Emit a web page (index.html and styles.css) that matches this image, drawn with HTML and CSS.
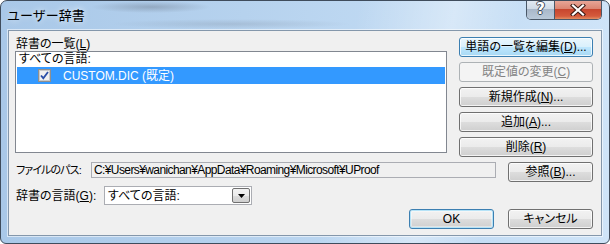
FILE: index.html
```html
<!DOCTYPE html>
<html lang="ja">
<head>
<meta charset="utf-8">
<title>ユーザー辞書</title>
<link rel="stylesheet" href="styles.css">
</head>
<body>
<div class="window">
  <div class="titlebar">
    <div class="title">ユーザー辞書</div>
    <div class="controls">
      <div class="ctl help"><span class="q">?</span></div>
      <div class="ctl close">
        <svg width="16" height="12" viewBox="0 0 16 12"><path d="M3 1.5 L13 10.5 M13 1.5 L3 10.5" stroke="#3b1a14" stroke-width="4.2" stroke-linecap="square"/><path d="M3 1.5 L13 10.5 M13 1.5 L3 10.5" stroke="#ffffff" stroke-width="2.2" stroke-linecap="square"/></svg>
      </div>
    </div>
  </div>
  <div class="client">
    <div class="top-row">
      <div class="list-col">
        <div class="label">辞書の一覧(<u>L</u>)</div>
        <div class="listbox">
          <div class="row-all">すべての言語:</div>
          <div class="row-sel">
            <span class="check"><svg width="13" height="13" viewBox="0 0 13 13"><rect x="0.5" y="0.5" width="12" height="12" fill="#dcdcdc" stroke="#8f8f8f"/><rect x="1.5" y="1.5" width="10" height="10" fill="#f0f0f0" stroke="#c9c9c9"/><path d="M3 6.5 L5.3 9.2 L10 3" fill="none" stroke="#2a4fa8" stroke-width="1.8"/></svg></span>
            <span class="sel-text">CUSTOM.DIC (既定)</span>
          </div>
        </div>
      </div>
      <div class="btn-col">
        <div class="btn hot">単語の一覧を編集(<u>D</u>)...</div>
        <div class="btn disabled">既定値の変更(<u>C</u>)</div>
        <div class="btn">新規作成(<u>N</u>)...</div>
        <div class="btn">追加(<u>A</u>)...</div>
        <div class="btn">削除(<u>R</u>)</div>
      </div>
    </div>
    <div class="path-row">
      <div class="path-label">ファイルのパス:</div>
      <div class="path-field">C:¥Users¥wanichan¥AppData¥Roaming¥Microsoft¥UProof</div>
      <div class="btn small">参照(<u>B</u>)...</div>
    </div>
    <div class="lang-row">
      <div class="lang-label">辞書の言語(<u>G</u>):</div>
      <div class="combo">
        <span class="combo-text">すべての言語:</span>
        <span class="combo-btn"><svg width="7" height="4" viewBox="0 0 7 4"><path d="M0 0 H7 L3.5 4 Z" fill="#000"/></svg></span>
      </div>
    </div>
    <div class="ok-row">
      <div class="btn small default">OK</div>
      <div class="btn small">キャンセル</div>
    </div>
  </div>
</div>
</body>
</html>
```
FILE: styles.css
```css
* { box-sizing: border-box; }
html, body { margin: 0; padding: 0; }
body {
  width: 610px;
  height: 244px;
  overflow: hidden;
  font-family: "Liberation Sans", "Noto Sans CJK JP", sans-serif;
  font-feature-settings: "palt";
  font-size: 12px;
  color: #000;
  background: #ffffff;
  white-space: nowrap;
}
u { text-decoration: underline; text-underline-offset: 1px; }

.window {
  width: 610px;
  height: 244px;
  border: 1px solid #3f4c5c;
  border-radius: 7px 7px 6px 6px;
  display: flex;
  flex-direction: column;
  overflow: hidden;
  background:
    radial-gradient(ellipse 60px 6px at 150px 6px, rgba(90,100,115,0.35), rgba(90,100,115,0) 100%),
    radial-gradient(ellipse 120px 5px at 230px 23px, rgba(110,120,135,0.22), rgba(110,120,135,0) 100%),
    linear-gradient(100deg, rgba(255,255,255,0) 55%, rgba(255,255,255,0.35) 70%, rgba(255,255,255,0) 80%),
    linear-gradient(90deg, #a9c8e8 0%, #b6d2ee 40%, #c3dcf4 75%, #cfe4f8 100%);
}

.titlebar {
  height: 29px;
  display: flex;
  align-items: flex-start;
  padding-left: 6px;
  padding-right: 7px;
  flex-shrink: 0;
}
.title {
  font-family: "Noto Sans CJK JP", sans-serif;
  font-feature-settings: normal;
  font-size: 13px;
  line-height: 15px;
  margin-top: 6px;
  color: #000;
  text-shadow: 0 0 6px rgba(255,255,255,0.9);
}
.controls {
  margin-left: auto;
  margin-top: -1px;
  display: flex;
  height: 20px;
  border: 1px solid #4a5868;
  border-top: none;
  border-radius: 0 0 5px 5px;
  overflow: hidden;
}
.ctl {
  height: 19px;
  display: flex;
  align-items: center;
  justify-content: center;
}
.help {
  width: 28px;
  border-right: 1px solid #4a5868;
  background: linear-gradient(180deg, #e3ebf4 0%, #d0dbe7 45%, #a9b8ca 50%, #b9c9d9 100%);
}
.q {
  font-family: "DejaVu Sans", sans-serif;
  font-weight: bold;
  font-size: 15px;
  line-height: 15px;
  color: #ffffff;
  text-shadow: -1px 0 #3a4655, 1px 0 #3a4655, 0 -1px #3a4655, 0 1px #3a4655;
}
.close {
  width: 46px;
  background: linear-gradient(180deg, #e9a99b 0%, #dc8673 45%, #c8462e 50%, #d45a3c 85%, #e38e62 100%);
}

.client {
  flex: 1;
  margin: 0 7px 7px 7px;
  background: #f0f0f0;
  border: 1px solid #8497ab;
  box-shadow: 0 0 0 1px rgba(255,255,255,0.55);
  padding: 6px 8px 0 6px;
  display: flex;
  flex-direction: column;
}

.top-row {
  display: flex;
  gap: 12px;
  height: 120px;
}
.list-col {
  width: 432px;
  display: flex;
  flex-direction: column;
}
.label {
  height: 14px;
  line-height: 14px;
  padding-left: 1px;
}
.listbox {
  height: 102px;
  background: #ffffff;
  border: 1px solid #828790;
  padding: 0 1px;
}
.row-all {
  height: 15px;
  line-height: 14px;
  padding-left: 2px;
}
.row-sel {
  height: 17px;
  background: #3399ff;
  color: #ffffff;
  display: flex;
  align-items: center;
}
.check {
  margin-left: 21px;
  width: 13px;
  height: 13px;
  display: flex;
}
.sel-text {
  margin-left: 12px;
  line-height: 14px;
}

.btn-col {
  width: 134px;
  display: flex;
  flex-direction: column;
  gap: 5px;
}
.btn {
  height: 20px;
  border: 1px solid #707070;
  border-radius: 3px;
  display: flex;
  align-items: center;
  justify-content: center;
  line-height: 14px;
  background: linear-gradient(180deg, #f2f2f2 0%, #ebebeb 50%, #dddddd 51%, #cfcfcf 100%);
  box-shadow: inset 0 0 0 1px rgba(255,255,255,0.75);
}
.btn.hot {
  border-color: #3c7fb1;
  background: linear-gradient(180deg, #eaf6fd 0%, #d9f0fc 50%, #bee6fd 51%, #a7d9f5 100%);
}
.btn.disabled {
  border-color: #adb2b5;
  background: #f4f4f4;
  color: #838383;
  box-shadow: none;
}
.btn.default {
  border-color: #3c7fb1;
  box-shadow: inset 0 0 0 1px #b6e3f7, inset 0 0 0 2px rgba(255,255,255,0.4);
}
.btn.small { width: 85px; flex-shrink: 0; }

.path-row {
  margin-top: 5px;
  display: flex;
  align-items: flex-start;
  height: 20px;
}
.path-label {
  width: 76px;
  padding-left: 1px;
  line-height: 16px;
  flex-shrink: 0;
  font-size: 11px;
  letter-spacing: -0.9px;
}
.path-field {
  width: 405px;
  height: 16px;
  border: 1px solid #abadb3;
  background: #f0f0f0;
  line-height: 14px;
  padding-left: 2px;
  overflow: hidden;
  margin-right: 12px;
  flex-shrink: 0;
  letter-spacing: -0.6px;
}

.lang-row {
  margin-top: 4px;
  display: flex;
  align-items: center;
  height: 19px;
}
.lang-label {
  width: 89px;
  padding-left: 1px;
  line-height: 14px;
  flex-shrink: 0;
}
.combo {
  width: 148px;
  height: 19px;
  border: 1px solid #abadb3;
  background: #ffffff;
  display: flex;
  align-items: center;
  padding: 1px;
}
.combo-text {
  flex: 1;
  padding-left: 2px;
  line-height: 14px;
}
.combo-btn {
  width: 18px;
  height: 15px;
  border: 1px solid #707070;
  border-radius: 2px;
  background: linear-gradient(180deg, #f2f2f2 0%, #ebebeb 50%, #dddddd 51%, #cfcfcf 100%);
  display: flex;
  align-items: center;
  justify-content: center;
}

.ok-row {
  margin-top: 4px;
  display: flex;
  justify-content: flex-end;
  gap: 14px;
}
```
